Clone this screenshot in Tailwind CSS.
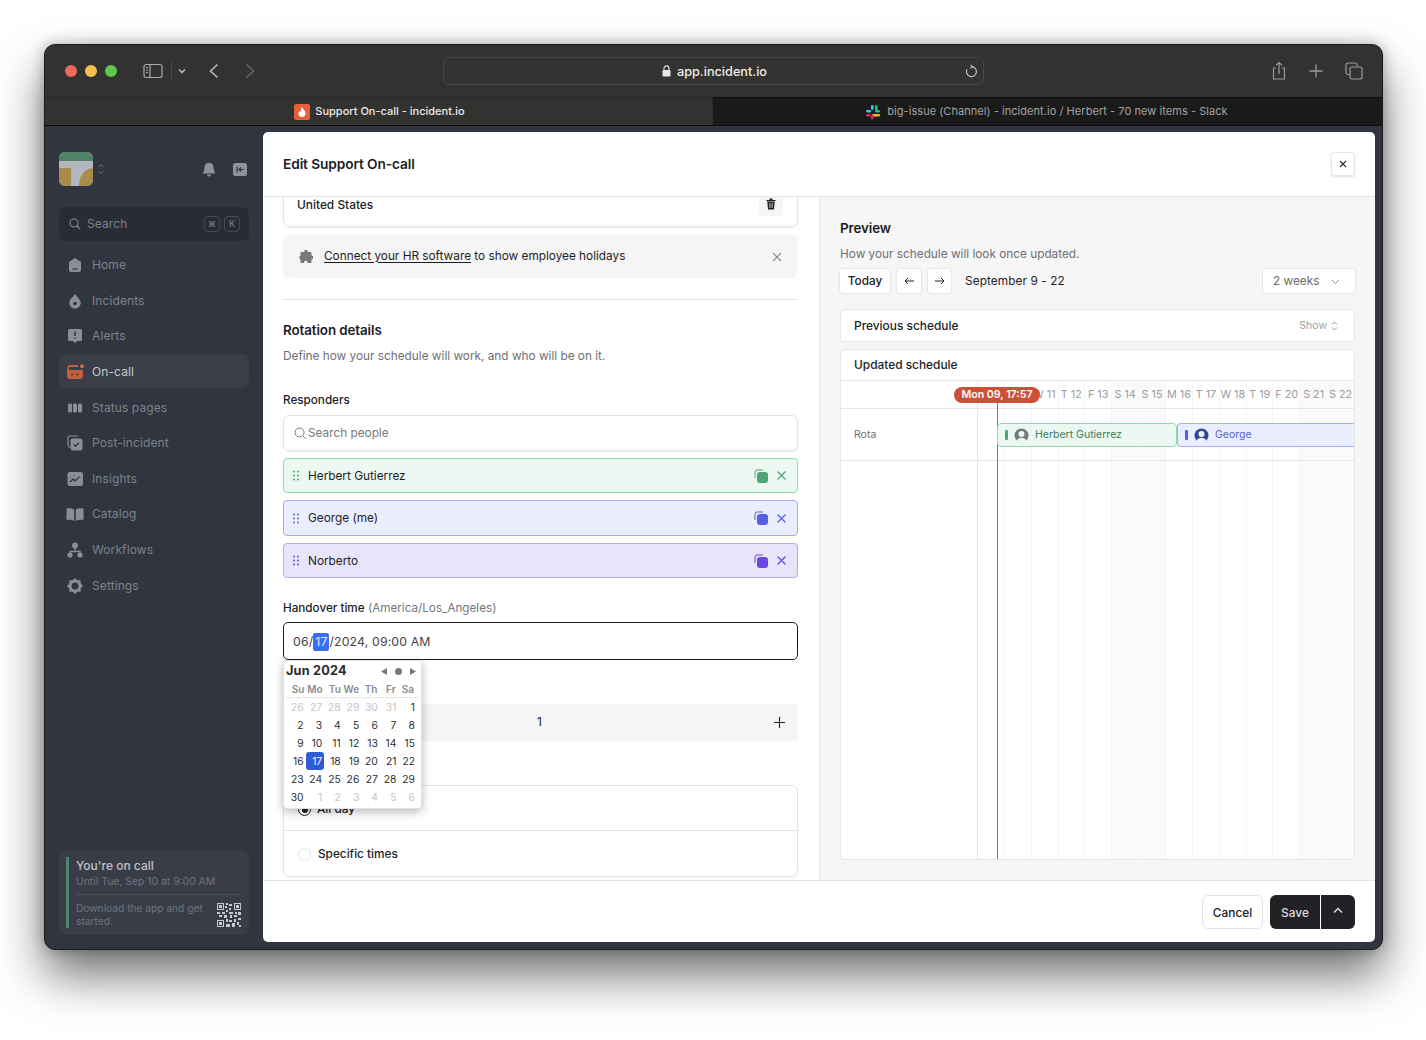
<!doctype html>
<html>
<head>
<meta charset="utf-8">
<script src="https://cdn.jsdelivr.net/npm/@tailwindcss/browser@4"></script>
</head>
<body class="bg-white font-['Inter','Liberation_Sans',sans-serif] overflow-hidden">
<div class="w-[1426px] h-[1040px] pt-[44px] pl-[44px]">
  <div class="w-[1339px] h-[906px] rounded-[11px] border border-[#1c1c1c] overflow-hidden flex flex-col shadow-[0_26px_48px_rgba(0,0,0,0.55),0_0_14px_rgba(0,0,0,0.28)] bg-[#31353f]">
    <!-- title bar -->
    <div class="h-[52px] shrink-0 bg-[#323230] flex items-center relative">
      <div class="flex gap-[8px] ml-[20px]">
        <span class="w-[12px] h-[12px] rounded-full bg-[#ec6a5e]"></span>
        <span class="w-[12px] h-[12px] rounded-full bg-[#f4bf4f]"></span>
        <span class="w-[12px] h-[12px] rounded-full bg-[#61c554]"></span>
      </div>
      <svg class="ml-[26px]" width="20" height="16" viewBox="0 0 20 16" fill="none" stroke="#a9a9a7" stroke-width="1.2"><rect x="1" y="1.5" width="18" height="13" rx="2"/><path d="M7 1.5v13"/><path d="M3 4.5h2M3 7h2M3 9.5h2"/></svg>
      <span class="w-px h-[18px] bg-[#484846] ml-[8px]"></span>
      <svg class="ml-[5px]" width="10" height="8" viewBox="0 0 10 8" fill="none" stroke="#b8b8b6" stroke-width="1.6"><path d="M2 2.500l3 3 3-3"/></svg>
      <svg class="ml-[21px]" width="12" height="16" viewBox="0 0 12 16" fill="none" stroke="#bdbdbb" stroke-width="1.5"><path d="M9.500 1.500L2.500 8l7 6.500"/></svg>
      <svg class="ml-[24px]" width="12" height="16" viewBox="0 0 12 16" fill="none" stroke="#666664" stroke-width="1.5"><path d="M2.500 1.500L9.500 8l-7 6.500"/></svg>
      <div class="ml-[187px] w-[541px] h-[28px] rounded-[6px] border border-[#474745] bg-[#333331] flex items-center relative">
        <div class="flex-1 flex items-center justify-center gap-[6px] text-[12.700px] font-medium text-[#ededeb] pt-[1px] pl-[2px]">
          <svg width="9" height="12" viewBox="0 0 9 12"><path d="M2 5V3.400a2.500 2.500 0 015 0V5" fill="none" stroke="#e6e6e4" stroke-width="1.100"/><rect x="0.500" y="5" width="8" height="6.500" rx="1.200" fill="#e6e6e4"/></svg>
          <span>app.incident.io</span>
        </div>
        <svg class="absolute right-[5px] top-[6px]" width="14" height="15" viewBox="0 0 14 15" fill="none" stroke="#c8c8c6" stroke-width="1.100"><path d="M8 2.600A5 5 0 1 1 3 5.200"/><path d="M6.500 0.800L8.600 2.700 6.300 4.400"/></svg>
      </div>
      <svg class="ml-[287px]" width="16" height="20" viewBox="0 0 16 20" fill="none" stroke="#9c9c9a" stroke-width="1.200"><path d="M5 7H2.500v11h11V7H11"/><path d="M8 13V1.500M5 4.200L8 1.500l3 2.700"/></svg>
      <svg class="ml-[21px]" width="16" height="16" viewBox="0 0 16 16" fill="none" stroke="#9c9c9a" stroke-width="1.300"><path d="M8 1.500v13M1.500 8h13"/></svg>
      <svg class="ml-[21px]" width="18" height="18" viewBox="0 0 18 18" fill="none" stroke="#9c9c9a" stroke-width="1.200"><path d="M4 12.500H3a2 2 0 01-2-2V3a2 2 0 012-2h7a2 2 0 012 2v1"/><rect x="5" y="5" width="12" height="12" rx="2"/></svg>
    </div>
    <!-- tabs -->
    <div class="h-[29px] shrink-0 flex border-b border-[#0c0c0c] text-[11px]">
      <div class="w-[667px] bg-[#323230] border-t border-[#2a2a28] flex items-center justify-center gap-[5px] font-medium text-[#ecebe9] pl-[2px]">
        <span class="w-[16px] h-[16px] rounded-[2px] bg-[#e2603a] flex items-center justify-center">
          <svg width="10" height="12" viewBox="0 0 10 12"><path d="M5 .8c.4 1.700 1.400 2.300 2.400 3.500 1.500 1.800 1.500 4.200.2 5.600-1.300 1.400-3.900 1.400-5.200 0C1.100 8.500 1.200 6.400 2.600 4.900c.3.800.6 1.100 1.100 1.300C3.600 4.200 4 2.200 5 .8z" fill="#fff"/></svg>
        </span>
        <span>Support On-call - incident.io</span>
      </div>
      <div class="flex-1 bg-[#1a1a1a] border-t border-l border-[#2b2b2b] border-t-[#0e0e0e] flex items-center justify-center gap-[4px] text-[#a3a3a1] pr-[2px] tracking-[0.05px]">
        <svg width="16" height="16" viewBox="0 0 16 16"><rect x="6" y="1" width="2.600" height="5" rx="1.300" fill="#36c5f0"/><rect x="1" y="6" width="5" height="2.600" rx="1.300" fill="#36c5f0"/><rect x="10" y="1" width="2.600" height="6" rx="1.300" fill="#2eb67d"/><rect x="10" y="6" width="5" height="2.600" rx="1.300" fill="#2eb67d"/><rect x="10" y="10" width="5" height="2.600" rx="1.300" fill="#ecb22e"/><rect x="7" y="10" width="5" height="2.600" rx="1.300" fill="#ecb22e"/><rect x="6" y="11" width="2.600" height="4.500" rx="1.300" fill="#e01e5a"/><rect x="1" y="10" width="5" height="2.600" rx="1.300" fill="#e01e5a"/></svg>
        <span class="ml-[2px]">big-issue (Channel) - incident.io / Herbert - 70 new items - Slack</span>
      </div>
    </div>
    <!-- content -->
    <div class="flex-1 flex min-h-0">
      <!-- sidebar -->
      <aside class="w-[218px] shrink-0 pl-[14px] pr-[14px] pt-[26px] pb-[14px] flex flex-col text-[12px] tracking-[0.1px] text-[#7e828c]">
        <div class="h-[34px] flex items-center">
          <svg width="34" height="34" viewBox="0 0 34 34"><defs><clipPath id="lg"><rect width="34" height="34" rx="6"/></clipPath></defs><g clip-path="url(#lg)"><rect width="34" height="34" fill="#b2b6bf"/><rect width="34" height="9" fill="#4f8468"/><path d="M0 16h12v18H0z" fill="#a98c4c"/><path d="M34 16v18H20c0-10 5-17 14-18z" fill="#a98c4c"/></g></svg>
          <svg class="ml-[4px]" width="8" height="12" viewBox="0 0 8 12" fill="none" stroke="#6f737c" stroke-width="1"><path d="M1.500 4L4 1.500 6.500 4M1.500 8L4 10.500 6.500 8"/></svg>
          <svg class="ml-[97px]" width="14" height="15" viewBox="0 0 14 15" fill="#8f939b"><path d="M7 .8a4.500 4.500 0 00-4.500 4.500c0 3.700-1.700 5-1.700 6.200h12.400c0-1.200-1.700-2.500-1.700-6.200A4.500 4.500 0 007 .8z"/><path d="M5 12.500a2 2 0 004 0z"/></svg>
          <svg class="ml-[17px]" width="14" height="13" viewBox="0 0 14 13"><rect width="14" height="13" rx="2.500" fill="#8f939b"/><path d="M4 3.500v6M11 6.500H6M8 4.500l-2 2 2 2" fill="none" stroke="#31353f" stroke-width="1.200"/></svg>
        </div>
        <div class="mt-[21px] h-[34px] rounded-[7px] bg-[#292c35] flex items-center pl-[10px] pr-[9px] gap-[6px] text-[#7e828c]">
          <svg width="12" height="12" viewBox="0 0 12 12" fill="none" stroke="#8a8e96" stroke-width="1.100"><circle cx="5" cy="5" r="4"/><path d="M8 8l3.200 3.200"/></svg>
          <span class="flex-1">Search</span>
          <span class="w-[16px] h-[16px] rounded-[4px] border border-[#464954] flex items-center justify-center text-[8px]">⌘</span>
          <span class="w-[16px] h-[16px] rounded-[4px] border border-[#464954] flex items-center justify-center text-[9px] -ml-[2px]">K</span>
        </div>
        <nav class="mt-[6px] flex flex-col gap-[1.650px]">
          <a class="h-[34px] flex items-center rounded-[7px] pl-[8px] pt-[2px] gap-[9px]"><svg width="16" height="16" viewBox="0 0 16 16" fill="#8a8e96"><path d="M8 1L2 5v8a2 2 0 002 2h8a2 2 0 002-2V5z"/><path d="M5.500 12h5" stroke="#31353f" stroke-width="1.200"/></svg><span>Home</span></a>
          <a class="h-[34px] flex items-center rounded-[7px] pl-[8px] pt-[2px] gap-[9px]"><svg width="16" height="16" viewBox="0 0 16 16" fill="#8a8e96"><path d="M8 .5c.8 2.800 5.700 5.500 5.700 9.500a5.700 5.700 0 01-11.400 0C2.300 6 7.200 3.300 8 .5z"/><circle cx="8" cy="10.500" r="1.700" fill="#31353f"/></svg><span>Incidents</span></a>
          <a class="h-[34px] flex items-center rounded-[7px] pl-[8px] pt-[2px] gap-[9px]"><svg width="16" height="16" viewBox="0 0 16 16" fill="#8a8e96"><path d="M2.500 1h11A1.500 1.500 0 0115 2.500v9a1.500 1.500 0 01-1.500 1.500H10l-2 2.300L6 13H2.500A1.500 1.500 0 011 11.500v-9A1.500 1.500 0 012.500 1z"/><path d="M8 3.500v4.500M8 9.500v1.300" stroke="#31353f" stroke-width="1.500"/></svg><span>Alerts</span></a>
          <a class="h-[34px] flex items-center rounded-[7px] pl-[8px] pt-[2px] gap-[8px] bg-[#3b3e48] text-[#c6c8cd]"><svg width="17" height="16" viewBox="0 0 17 16" fill="none"><path d="M11 2H3a2 2 0 00-2 2v8a2 2 0 002 2h10a2 2 0 002-2V7H1" stroke="#c2603f" stroke-width="1.800"/><rect x="1" y="7" width="14" height="7" rx="1" fill="#c2603f"/><path d="M4 10.500h2.500M9 10.500h2.500" stroke="#3b3e48" stroke-width="1.300"/><circle cx="15" cy="2.200" r="2" fill="#d2694a"/></svg><span>On-call</span></a>
          <a class="h-[34px] flex items-center rounded-[7px] pl-[8px] pt-[2px] gap-[9px]"><svg width="16" height="16" viewBox="0 0 16 16" fill="#8a8e96"><rect x="1" y="3.500" width="4" height="9" rx="1.500"/><rect x="6" y="3.500" width="4" height="9" rx="1.500"/><rect x="11" y="3.500" width="4" height="9" rx="1.500"/></svg><span>Status pages</span></a>
          <a class="h-[34px] flex items-center rounded-[7px] pl-[8px] pt-[2px] gap-[9px]"><svg width="16" height="16" viewBox="0 0 16 16"><path d="M11 1H3a2 2 0 00-2 2v7a3 3 0 002 2.500" fill="none" stroke="#8a8e96" stroke-width="1.200"/><rect x="3.500" y="3.500" width="12" height="12" rx="2.500" fill="#8a8e96"/><path d="M6.800 9.500l1.800 1.800 3.300-3.600" fill="none" stroke="#31353f" stroke-width="1.300"/></svg><span>Post-incident</span></a>
          <a class="h-[34px] flex items-center rounded-[7px] pl-[8px] pt-[2px] gap-[9px]"><svg width="16" height="16" viewBox="0 0 16 16"><rect x="0.500" y="1" width="15.500" height="14" rx="2.500" fill="#8a8e96"/><path d="M3 11l3-3 2 2 4.500-4.500M3 6.500h.5M7 5h.5" fill="none" stroke="#31353f" stroke-width="1.300"/></svg><span>Insights</span></a>
          <a class="h-[34px] flex items-center rounded-[7px] pl-[7px] pt-[2px] gap-[8px]"><svg width="18" height="16" viewBox="0 0 17 16" fill="#8a8e96"><path d="M0 2.500c2.500-.6 5.300-.4 7.700 1V15c-2.400-1.400-5.200-1.600-7.700-1z"/><path d="M17 2.500c-2.500-.6-5.300-.4-7.700 1V15c2.400-1.400 5.200-1.600 7.700-1z"/></svg><span>Catalog</span></a>
          <a class="h-[34px] flex items-center rounded-[7px] pl-[8px] pt-[2px] gap-[9px]"><svg width="16" height="16" viewBox="0 0 16 16" fill="#8a8e96"><circle cx="8" cy="3.500" r="3"/><circle cx="3" cy="13" r="2.600"/><circle cx="13" cy="13" r="2.600"/><path d="M8 6v3.500M3 12V9.500h10V12" fill="none" stroke="#8a8e96" stroke-width="1.300"/></svg><span>Workflows</span></a>
          <a class="h-[34px] flex items-center rounded-[7px] pl-[8px] pt-[2px] gap-[9px]"><svg width="16" height="16" viewBox="0 0 16 16"><circle cx="8" cy="8" r="5" fill="none" stroke="#8a8e96" stroke-width="3"/><path d="M8 .5v3M8 12.500v3M.5 8h3M12.500 8h3M2.700 2.700l2.100 2.100M11.200 11.200l2.100 2.100M13.300 2.700l-2.100 2.100M4.800 11.200l-2.100 2.100" stroke="#8a8e96" stroke-width="2.600"/></svg><span>Settings</span></a>
        </nav>
        <div class="mt-auto h-[85px] rounded-[7px] bg-[#3a3d47] relative pl-[17px] pr-[8px] pt-[9px] tracking-normal">
          <span class="absolute left-[7px] top-[7px] bottom-[7px] w-[3px] bg-[#4d8670]"></span>
          <div class="text-[12px] leading-[14px] font-medium text-[#c0c2c7]">You're on call</div>
          <div class="text-[10.400px] leading-[14px] mt-[2px] text-[#6f737d]">Until Tue, Sep 10 at 9:00 AM</div>
          <div class="h-px bg-[#4c4f59] mt-[5px]"></div>
          <div class="flex mt-[7px] justify-between">
            <div class="text-[10.200px] leading-[13px] text-[#6f737d] w-[135px]">Download the app and get started.</div>
            <svg class="mt-[1px]" width="24" height="24" viewBox="0 0 24 24" fill="#c6c8cc"><path fill-rule="evenodd" d="M0 0h7v7H0zM1 1v5h5V1zM17 0h7v7h-7zM18 1v5h5V1zM0 17h7v7H0zM1 18v5h5v-5z"/><path d="M2 2h3v3H2zM19 2h3v3h-3zM2 19h3v3H2zM9 0h2v2H9zM12 1h3v2h-3zM8 3h2v2H8zM12 5h2v2h-2zM9 7h2v2H9zM0 9h3v2H0zM5 9h3v2H5zM12 9h4v2h-4zM18 9h2v2h-2zM21 9h3v3h-3zM2 12h3v2H2zM7 12h3v3H7zM13 12h2v3h-2zM17 12h3v2h-3zM9 16h2v3H9zM12 17h3v2h-3zM17 16h2v3h-2zM21 15h3v2h-3zM9 21h4v3H9zM15 20h3v4h-3zM20 19h2v3h-2zM22 22h2v2h-2z"/></svg>
          </div>
        </div>
      </aside>
      <!-- modal -->
      <main class="w-[1112px] mt-[6px] mb-[7px] bg-white rounded-[5px] overflow-hidden flex flex-col text-[#1d1d1f]">
        <header class="h-[65px] shrink-0 border-b border-[#e4e4e6] flex items-center justify-between pl-[20px] pr-[20px]">
          <h1 class="text-[13.700px] font-semibold tracking-[-0.1px]">Edit Support On-call</h1>
          <button class="w-[24px] h-[24px] rounded-[3px] border border-[#e6e6e8] shadow-[0_1px_2px_rgba(0,0,0,0.12)] flex items-center justify-center -mt-[1px]"><svg width="8" height="8" viewBox="0 0 8 8" stroke="#333" stroke-width="1.200"><path d="M1 1l6 6M7 1L1 7"/></svg></button>
        </header>
        <div class="flex-1 flex min-h-0">
          <!-- left -->
          <section class="w-[557px] shrink-0 border-r border-[#e4e4e6] pl-[20px] pr-[21px] overflow-hidden text-[11.800px] relative">
            <div class="h-[40px] -mt-[10px] rounded-[7px] border border-[#e3e3e5] shadow-[0_1px_2px_rgba(0,0,0,0.08)] flex items-center justify-between pl-[13px] pr-[14px]">
              <span class="font-medium text-[11.900px] -mt-[4px]">United States</span>
              <span class="w-[24px] h-[24px] rounded-[4px] bg-[#f5f5f5] flex items-center justify-center -mt-[6px]"><svg width="10" height="12" viewBox="0 0 10 12" fill="#222"><path d="M0.500 2h9v1.300h-9zM3.500.5h3V2h-3zM1.300 3.800h7.400L8 11.500H2zM3.500 5v5h.8V5zM5.700 5v5h.8V5z" fill-rule="evenodd"/></svg></span>
            </div>
            <div class="mt-[8px] h-[43px] rounded-[6px] bg-[#f5f5f5] flex items-center pl-[16px] pr-[16px]">
              <svg width="14" height="14" viewBox="0 0 14 14" fill="#77777c"><path d="M5.500 1a1.500 1.500 0 013 0c0 .5.400.9.900.9h2.100a1 1 0 011 1V5c0 .6.500.9 1 .9a1.500 1.500 0 010 3c-.5 0-1 .3-1 .9v2.200a1 1 0 01-1 1H9.200c-.6 0-.9-.5-.9-1a1.500 1.500 0 00-3 0c0 .5-.4 1-.9 1H2.500a1 1 0 01-1-1v-2c0-.5-.4-.9-1-.9-.2-2 0-3 .2-3 .6 0 .8-.5.8-1V3a1 1 0 011-1h2.100c.5 0 .9-.5.900-1z"/></svg>
              <span class="ml-[11px] flex-1"><span class="underline underline-offset-[2px]">Connect your HR software</span> to show employee holidays</span>
              <svg width="10" height="10" viewBox="0 0 10 10" stroke="#8a8a8f" stroke-width="1.100"><path d="M1 1l8 8M9 1L1 9"/></svg>
            </div>
            <div class="h-px bg-[#e4e4e6] mt-[21px]"></div>
            <h2 class="mt-[22px] text-[13.400px] leading-[16px] font-semibold tracking-[-0.1px]">Rotation details</h2>
            <p class="mt-[10px] leading-[16px] text-[#6f6f75] text-[11.800px]">Define how your schedule will work, and who will be on it.</p>
            <div class="mt-[28px] leading-[16px] font-medium text-[11.700px]">Responders</div>
            <div class="mt-[7px] h-[36px] rounded-[6px] border border-[#e3e3e5] shadow-[0_1px_2px_rgba(0,0,0,0.08)] flex items-center pl-[10px] gap-[1px] text-[#77777d]">
              <svg width="13" height="13" viewBox="0 0 13 13" fill="none" stroke="#7d7d82" stroke-width="1"><circle cx="5.500" cy="5.500" r="4.500"/><path d="M8.800 8.800l3.400 3.400"/></svg>
              <span class="pt-[2px]">Search people</span>
            </div>
            <div class="mt-[7px] h-[35px] rounded-[4px] border border-[#8fdcb0] bg-[#ebf9f2] flex items-center pl-[8px] pr-[11px]">
              <svg width="9" height="11" viewBox="0 0 9 11" fill="#4fa374"><circle cx="2" cy="1.500" r="1"/><circle cx="6" cy="1.500" r="1"/><circle cx="2" cy="5.500" r="1"/><circle cx="6" cy="5.500" r="1"/><circle cx="2" cy="9.500" r="1"/><circle cx="6" cy="9.500" r="1"/></svg>
              <span class="ml-[7px] flex-1 pt-[2px]">Herbert Gutierrez</span>
              <svg width="14" height="14" viewBox="0 0 14 14"><path d="M9 1H3a2 2 0 00-2 2v6" fill="none" stroke="#4fa374" stroke-width="1"/><rect x="3" y="3" width="11" height="11" rx="3" fill="#4fa374"/></svg>
              <svg class="ml-[9px]" width="9" height="9" viewBox="0 0 9 9" stroke="#4fa374" stroke-width="1.200"><path d="M.5.500l8 8M8.500.500l-8 8"/></svg>
            </div>
            <div class="mt-[7px] h-[36px] rounded-[4px] border border-[#a3aef5] bg-[#ebeefe] flex items-center pl-[8px] pr-[11px]">
              <svg width="9" height="11" viewBox="0 0 9 11" fill="#5660e0"><circle cx="2" cy="1.500" r="1"/><circle cx="6" cy="1.500" r="1"/><circle cx="2" cy="5.500" r="1"/><circle cx="6" cy="5.500" r="1"/><circle cx="2" cy="9.500" r="1"/><circle cx="6" cy="9.500" r="1"/></svg>
              <span class="ml-[7px] flex-1 pt-[2px]">George (me)</span>
              <svg width="14" height="14" viewBox="0 0 14 14"><path d="M9 1H3a2 2 0 00-2 2v6" fill="none" stroke="#5660e0" stroke-width="1"/><rect x="3" y="3" width="11" height="11" rx="3" fill="#5660e0"/></svg>
              <svg class="ml-[9px]" width="9" height="9" viewBox="0 0 9 9" stroke="#5660e0" stroke-width="1.200"><path d="M.5.500l8 8M8.500.500l-8 8"/></svg>
            </div>
            <div class="mt-[7px] h-[35px] rounded-[4px] border border-[#b6a9f2] bg-[#e8e5fa] flex items-center pl-[8px] pr-[11px]">
              <svg width="9" height="11" viewBox="0 0 9 11" fill="#6a47e0"><circle cx="2" cy="1.500" r="1"/><circle cx="6" cy="1.500" r="1"/><circle cx="2" cy="5.500" r="1"/><circle cx="6" cy="5.500" r="1"/><circle cx="2" cy="9.500" r="1"/><circle cx="6" cy="9.500" r="1"/></svg>
              <span class="ml-[7px] flex-1 pt-[2px]">Norberto</span>
              <svg width="14" height="14" viewBox="0 0 14 14"><path d="M9 1H3a2 2 0 00-2 2v6" fill="none" stroke="#6a47e0" stroke-width="1"/><rect x="3" y="3" width="11" height="11" rx="3" fill="#6a47e0"/></svg>
              <svg class="ml-[9px]" width="9" height="9" viewBox="0 0 9 9" stroke="#6a47e0" stroke-width="1.200"><path d="M.5.500l8 8M8.500.500l-8 8"/></svg>
            </div>
            <div class="mt-[22px] leading-[16px] text-[11.700px]"><span class="font-medium">Handover time</span> <span class="text-[#77777d]">(America/Los_Angeles)</span></div>
            <div class="mt-[6px] h-[38px] rounded-[5px] border border-[#1d1d1f] flex items-center pl-[9px] text-[#444448] text-[12.300px] tracking-[0.14px] pt-[2px]">06/<span class="bg-[#3b6ef0] text-white/85 rounded-[2px] px-[2px] leading-[18px]">17</span>/2024, 09:00 AM</div>
            <div class="mt-[44px] h-[37px] bg-[#f5f5f5] rounded-[3px] flex items-center justify-between pr-[13px] pl-[254px]">
              <span class="pt-[1px]">1</span>
              <svg width="11" height="11" viewBox="0 0 11 11" stroke="#222" stroke-width="1.100"><path d="M5.500 0v11M0 5.500h11"/></svg>
            </div>
            <div class="mt-[44px] h-[92px] rounded-[7px] border border-[#e3e3e5] flex flex-col shadow-[0_1px_2px_rgba(0,0,0,0.06)]">
              <div class="h-[45px] border-b border-[#e3e3e5] flex items-center pl-[14px] gap-[6px] font-medium pt-[3px]">
                <span class="w-[13px] h-[13px] rounded-full border border-[#222] flex items-center justify-center"><span class="w-[6px] h-[6px] rounded-full bg-[#222]"></span></span><span>All day</span>
              </div>
              <div class="flex-1 flex items-center pl-[14px] gap-[7px] font-medium pt-[2px]">
                <span class="w-[13px] h-[13px] rounded-full border border-[#e3e3e5]"></span><span>Specific times</span>
              </div>
            </div>
            <!-- date popup -->
            <div class="absolute left-[20px] top-[463px] w-[139px] h-[149px] bg-white rounded-[4px] shadow-[0_3px_10px_rgba(0,0,0,0.28)] border border-[#e2e2e4] px-[2px]">
              <div class="flex items-center justify-between h-[20px] pr-[3px]">
                <span class="text-[12.700px] font-bold tracking-[0.2px] text-[#2a2a2c]">Jun 2024</span>
                <span class="flex items-center gap-[8px]">
                  <svg width="6" height="7" viewBox="0 0 6 7" fill="#77777c"><path d="M6 0v7L0 3.500z"/></svg>
                  <span class="w-[7px] h-[7px] rounded-full bg-[#77777c]"></span>
                  <svg width="6" height="7" viewBox="0 0 6 7" fill="#77777c"><path d="M0 0v7l6-3.500z"/></svg>
                </span>
              </div>
              <div class="grid grid-cols-7 text-right h-[17px] border-b border-[#e4e4e6] text-[10px] font-semibold text-[#8a8a8f] leading-[16px] pr-[5px]">
                <span>Su</span><span>Mo</span><span>Tu</span><span>We</span><span>Th</span><span>Fr</span><span>Sa</span>
              </div>
              <div class="grid grid-cols-7 text-right auto-rows-[18px] text-[10.300px] leading-[18px] text-[#2e2e30] pl-[1px] pr-[2px]">
                <span class="pr-[2px] text-[#c4c4c7]">26</span><span class="pr-[2px] text-[#c4c4c7]">27</span><span class="pr-[2px] text-[#c4c4c7]">28</span><span class="pr-[2px] text-[#c4c4c7]">29</span><span class="pr-[2px] text-[#c4c4c7]">30</span><span class="pr-[2px] text-[#c4c4c7]">31</span><span class="pr-[2px]">1</span>
                <span class="pr-[2px]">2</span><span class="pr-[2px]">3</span><span class="pr-[2px]">4</span><span class="pr-[2px]">5</span><span class="pr-[2px]">6</span><span class="pr-[2px]">7</span><span class="pr-[2px]">8</span>
                <span class="pr-[2px]">9</span><span class="pr-[2px]">10</span><span class="pr-[2px]">11</span><span class="pr-[2px]">12</span><span class="pr-[2px]">13</span><span class="pr-[2px]">14</span><span class="pr-[2px]">15</span>
                <span class="pr-[2px]">16</span><span class="pr-[2px] bg-[#2f5bd6] text-white rounded-[3px]">17</span><span class="pr-[2px]">18</span><span class="pr-[2px]">19</span><span class="pr-[2px]">20</span><span class="pr-[2px]">21</span><span class="pr-[2px]">22</span>
                <span class="pr-[2px]">23</span><span class="pr-[2px]">24</span><span class="pr-[2px]">25</span><span class="pr-[2px]">26</span><span class="pr-[2px]">27</span><span class="pr-[2px]">28</span><span class="pr-[2px]">29</span>
                <span class="pr-[2px]">30</span><span class="pr-[2px] text-[#c4c4c7]">1</span><span class="pr-[2px] text-[#c4c4c7]">2</span><span class="pr-[2px] text-[#c4c4c7]">3</span><span class="pr-[2px] text-[#c4c4c7]">4</span><span class="pr-[2px] text-[#c4c4c7]">5</span><span class="pr-[2px] text-[#c4c4c7]">6</span>
              </div>
            </div>
          </section>
          <!-- right -->
          <section class="flex-1 bg-[#f6f6f6] pl-[20px] pr-[20px] pt-[23px] pb-[20px] flex flex-col text-[11.800px] min-w-0">
            <h2 class="text-[13.400px] leading-[16px] font-semibold tracking-[-0.1px]">Preview</h2>
            <p class="mt-[10px] leading-[16px] text-[#6f6f75] text-[11.800px]">How your schedule will look once updated.</p>
            <div class="mt-[7px] h-[24px] flex items-center">
              <span class="h-[24px] w-[50px] rounded-[3px] bg-white shadow-[0_0_2px_rgba(0,0,0,0.22)] flex items-center justify-center font-medium pt-[2px]">Today</span>
              <span class="ml-[7px] h-[24px] w-[24px] rounded-[3px] bg-white shadow-[0_0_2px_rgba(0,0,0,0.22)] flex items-center justify-center"><svg width="10" height="8" viewBox="0 0 10 8" fill="none" stroke="#222" stroke-width="1"><path d="M10 4H1M4 1L1 4l3 3"/></svg></span>
              <span class="ml-[7px] h-[24px] w-[23px] rounded-[3px] bg-white shadow-[0_0_2px_rgba(0,0,0,0.22)] flex items-center justify-center"><svg width="10" height="8" viewBox="0 0 10 8" fill="none" stroke="#222" stroke-width="1"><path d="M0 4h9M6 1l3 3-3 3"/></svg></span>
              <span class="ml-[14px] flex-1 tracking-[0.1px] pt-[2px]">September 9 - 22</span>
              <span class="w-[92px] h-[24px] rounded-[3px] bg-white shadow-[0_0_2px_rgba(0,0,0,0.22)] flex items-center justify-between pl-[10px] pr-[15px] text-[#6b6b70] pt-[1px]"><span>2 weeks</span><svg width="9" height="6" viewBox="0 0 9 6" fill="none" stroke="#8a8a8f" stroke-width="1"><path d="M1 1l3.500 3.500L8 1"/></svg></span>
            </div>
            <div class="mt-[16px] h-[33px] rounded-[4px] bg-white border border-[#e6e6e8] flex items-center justify-between pl-[13px] pr-[16px]">
              <span class="font-medium text-[11.900px]">Previous schedule</span>
              <span class="flex items-center gap-[4px] text-[10.500px] text-[#a0a0a4]">Show <svg width="7" height="10" viewBox="0 0 7 10" fill="none" stroke="#8a8a8f" stroke-width=".9"><path d="M1 3.500L3.500 1 6 3.500M1 6.500L3.500 9 6 6.500"/></svg></span>
            </div>
            <div class="mt-[7px] flex-1 rounded-[4px] bg-white border border-[#e6e6e8] flex flex-col overflow-hidden">
              <div class="h-[31px] shrink-0 border-b border-[#e6e6e8] flex items-center pl-[13px] font-medium text-[11.900px]">Updated schedule</div>
              <div class="flex-1 relative">
                <div class="absolute left-[136px] top-0 bottom-0 right-0 grid grid-cols-14 border-l border-[#e6e6e8]">
                  <span class="border-r border-[#f5f5f6]"></span><span class="border-r border-[#f5f5f6]"></span><span class="border-r border-[#f5f5f6]"></span><span class="border-r border-[#f5f5f6]"></span><span class="border-r border-[#f5f5f6]"></span>
                  <span class="border-r border-[#f5f5f6] bg-[#fafafa]"></span><span class="border-r border-[#f5f5f6] bg-[#fafafa]"></span>
                  <span class="border-r border-[#f5f5f6]"></span><span class="border-r border-[#f5f5f6]"></span><span class="border-r border-[#f5f5f6]"></span><span class="border-r border-[#f5f5f6]"></span><span class="border-r border-[#f5f5f6]"></span>
                  <span class="border-r border-[#f5f5f6] bg-[#fafafa]"></span><span class="bg-[#fafafa]"></span>
                </div>
                <div class="relative h-[28px] border-b border-[#e6e6e8] pl-[136px]">
                  <div class="grid grid-cols-14 h-full items-center text-center text-[10.800px] text-[#9a9a9f] whitespace-nowrap pt-[2px]">
                    <span></span><span></span><span>W 11</span><span>T 12</span><span>F 13</span><span>S 14</span><span>S 15</span><span>M 16</span><span>T 17</span><span>W 18</span><span>T 19</span><span>F 20</span><span>S 21</span><span>S 22</span>
                  </div>
                </div>
                <div class="relative h-[52px] border-b border-[#e6e6e8] flex items-center pl-[13px] text-[10.500px] text-[#6f6f75]">Rota</div>
                <span class="absolute left-[156px] top-[22px] bottom-0 w-px bg-[#cf5a44]"></span>
                <span class="absolute left-[113px] top-[6px] h-[16px] w-[86px] rounded-full bg-[#cc5038] text-white text-[10.600px] font-semibold leading-[16px] text-center">Mon 09, 17:57</span>
                <div class="absolute left-[156px] top-[42px] h-[24px] w-[180px] rounded-[4px] border border-[#8fdcb0] bg-[#ebf9f2] flex items-center pl-[7px] text-[10.500px] text-[#3f7a5c]">
                  <span class="w-[3px] h-[10px] rounded-[1px] bg-[#4fa374]"></span>
                  <svg class="ml-[6px]" width="15" height="15" viewBox="0 0 15 15"><circle cx="7.500" cy="7.500" r="7" fill="#77777c"/><circle cx="7.500" cy="6" r="3" fill="#ebf9f2"/><path d="M2.500 13a5.500 5.500 0 0110 0 7 7 0 01-10 0z" fill="#ebf9f2"/></svg>
                  <span class="ml-[6px]">Herbert Gutierrez</span>
                </div>
                <div class="absolute left-[336px] top-[42px] h-[24px] right-0 rounded-l-[4px] border border-r-0 border-[#a3aef5] bg-[#ebeefe] flex items-center pl-[7px] text-[10.500px] text-[#5660d8]">
                  <span class="w-[3px] h-[10px] rounded-[1px] bg-[#5660e0]"></span>
                  <svg class="ml-[6px]" width="15" height="15" viewBox="0 0 15 15"><circle cx="7.500" cy="7.500" r="7" fill="#2c4a8c"/><circle cx="7.500" cy="6" r="3" fill="#ebeefe"/><path d="M2.500 13a5.500 5.500 0 0110 0 7 7 0 01-10 0z" fill="#ebeefe"/></svg>
                  <span class="ml-[6px]">George</span>
                </div>
              </div>
            </div>
          </section>
        </div>
        <footer class="h-[62px] shrink-0 border-t border-[#e4e4e6] flex items-center justify-end pr-[20px] text-[11.900px]">
          <button class="h-[34px] w-[61px] rounded-[6px] border border-[#e4e4e6] font-medium pt-[2px]">Cancel</button>
          <button class="ml-[7px] h-[34px] w-[50px] rounded-l-[6px] bg-[#222226] text-[#dcdcde] font-medium pt-[2px]">Save</button>
          <button class="ml-px h-[34px] w-[34px] rounded-r-[6px] bg-[#222226] flex items-center justify-center"><svg class="-mt-[2px]" width="10" height="7" viewBox="0 0 10 7" fill="none" stroke="#e6e6e8" stroke-width="1.300"><path d="M1 5.500L5 1.500l4 4"/></svg></button>
        </footer>
      </main>
    </div>
  </div>
</div>
</body>
</html>
